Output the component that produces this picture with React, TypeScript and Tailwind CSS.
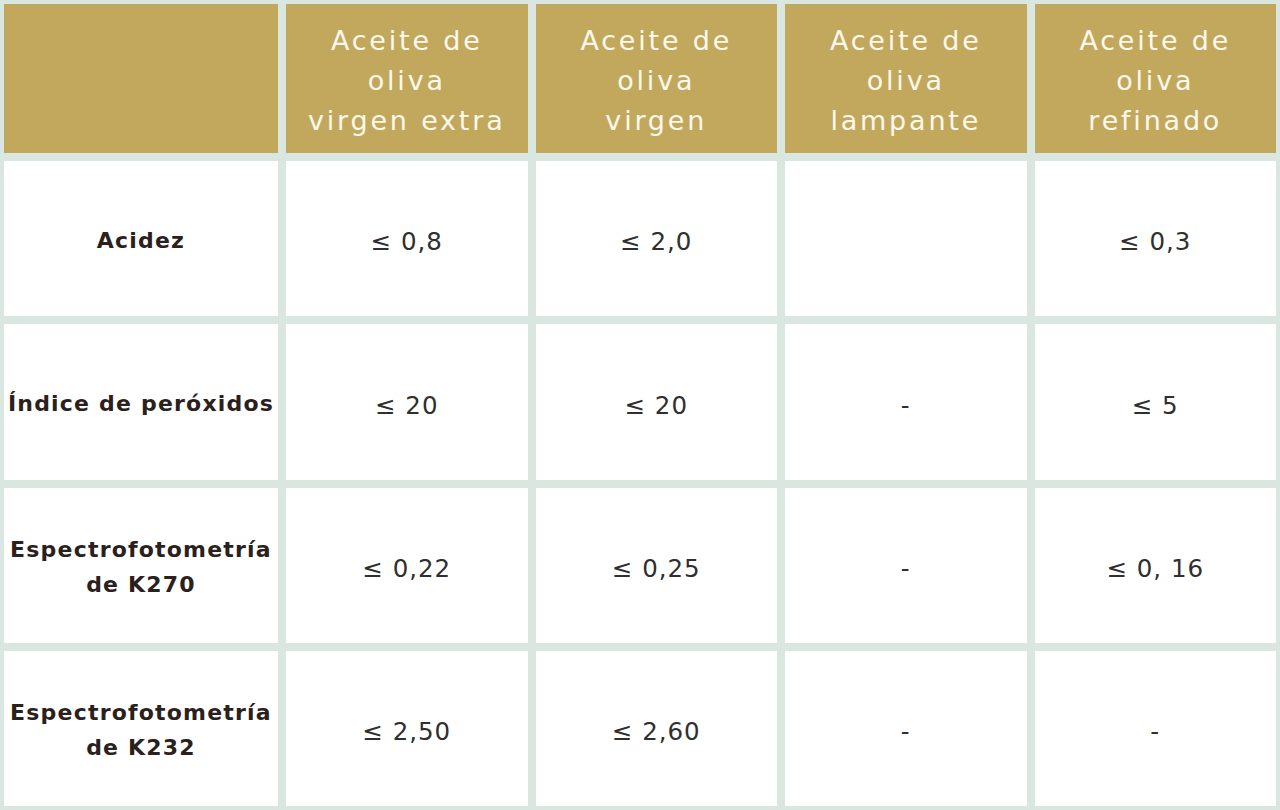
const headers = [
  ["Aceite de", "oliva", "virgen extra"],
  ["Aceite de", "oliva", "virgen"],
  ["Aceite de", "oliva", "lampante"],
  ["Aceite de", "oliva", "refinado"],
];

const rows = [
  { label: ["Acidez"], values: ["≤ 0,8", "≤ 2,0", "", "≤ 0,3"] },
  { label: ["Índice de peróxidos"], values: ["≤ 20", "≤ 20", "-", "≤ 5"] },
  { label: ["Espectrofotometría", "de K270"], values: ["≤ 0,22", "≤ 0,25", "-", "≤ 0, 16"] },
  { label: ["Espectrofotometría", "de K232"], values: ["≤ 2,50", "≤ 2,60", "-", "-"] },
];

export default function App() {
  return (
    <div
      className="grid h-[810px] w-[1280px] grid-cols-[274px_repeat(4,1fr)] grid-rows-[149px_repeat(4,1fr)] gap-2 bg-[#dae7e0] p-1"
      style={{ fontFamily: '"DejaVu Sans", "Open Sans", sans-serif' }}
    >
      {/* header row */}
      <div className="bg-[#c2a85c]" />
      {headers.map((lines, i) => (
        <div
          key={i}
          className="flex flex-col items-center justify-center bg-[#c2a85c] pt-1 text-center text-[27px] leading-[40px] tracking-[2.8px] text-[#fdf8ec]"
        >
          {lines.map((l) => (
            <span key={l}>{l}</span>
          ))}
        </div>
      ))}

      {/* body */}
      {rows.map((row, r) => (
        <>
          <div
            key={`l${r}`}
            className="flex flex-col items-center justify-center bg-white pt-1 text-center text-[22px] font-bold leading-[35px] tracking-[1.2px] text-[#2b211c]"
          >
            {row.label.map((l) => (
              <span key={l}>{l}</span>
            ))}
          </div>
          {row.values.map((v, c) => (
            <div
              key={`v${r}-${c}`}
              className="flex items-center justify-center bg-white pt-2 text-[24.5px] tracking-[1px] text-[#2f2f2f]"
            >
              {v}
            </div>
          ))}
        </>
      ))}
    </div>
  );
}
